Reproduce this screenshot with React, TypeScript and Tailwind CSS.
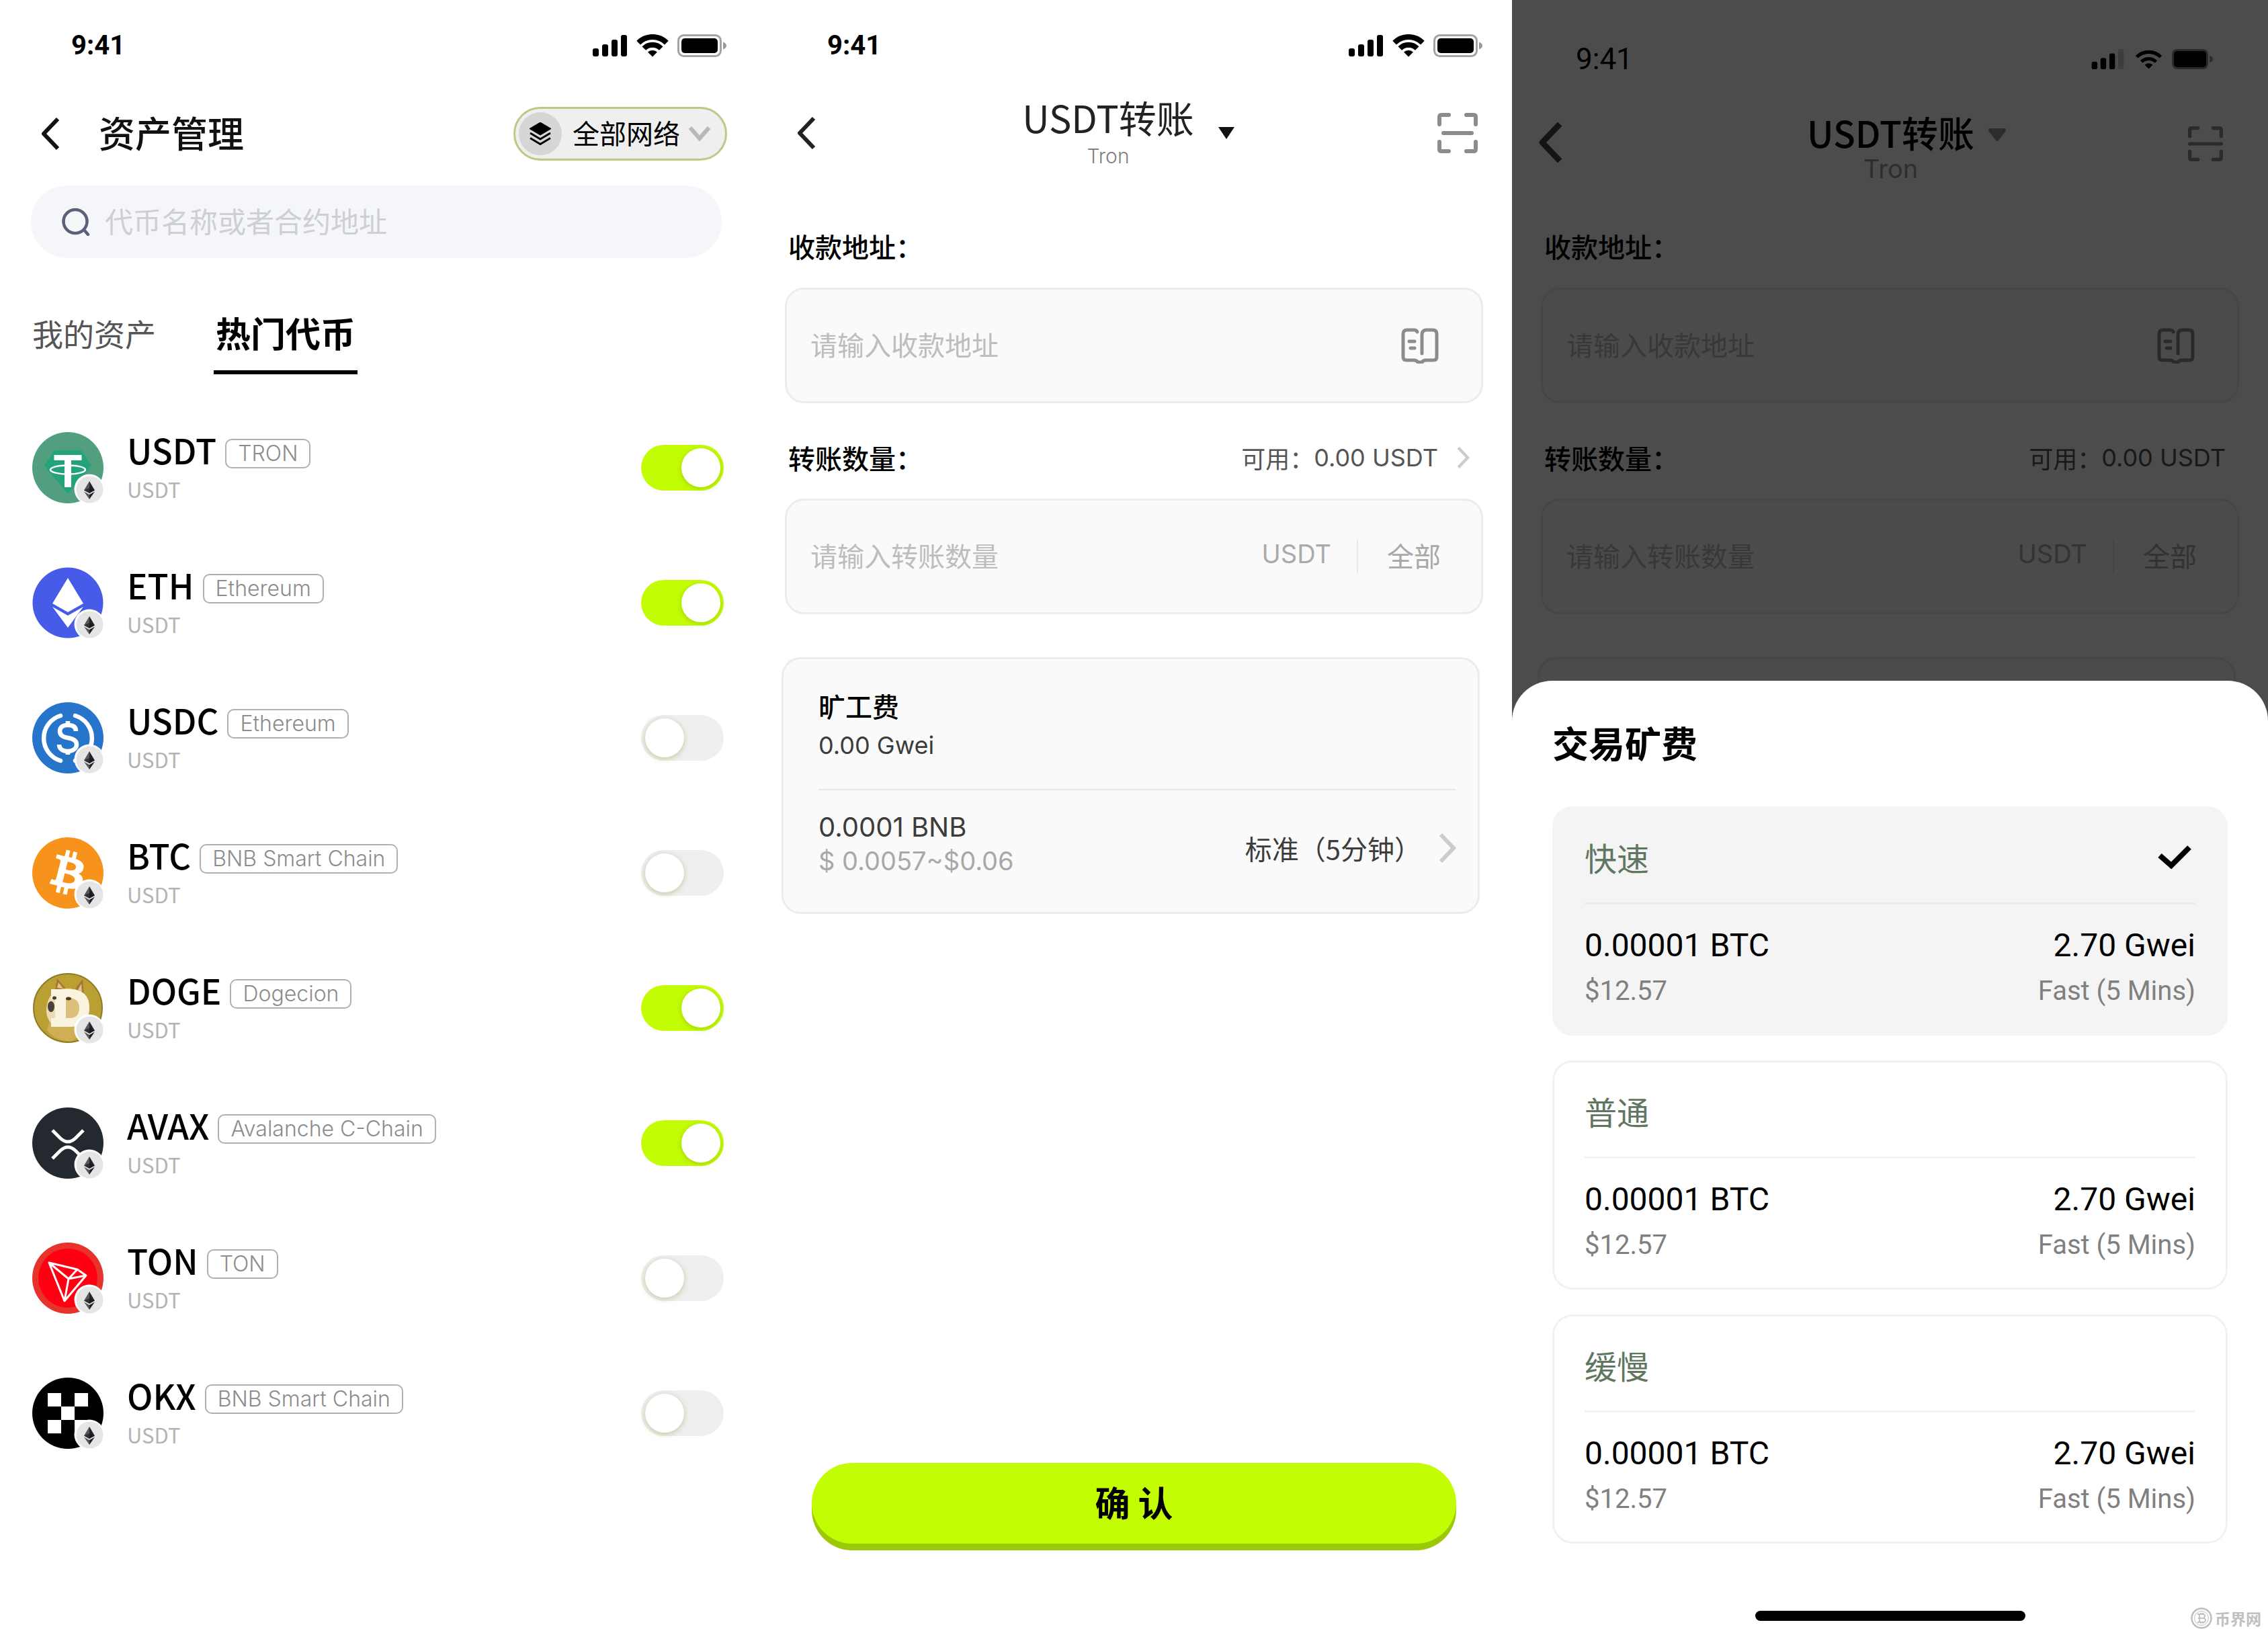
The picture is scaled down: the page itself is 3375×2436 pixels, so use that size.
import { useState, type ReactNode } from "react";
import { SiBitcoin } from "react-icons/si";

/* ---------- status bar ---------- */

function Signal({ faded = false, className }: { faded?: boolean; className: string }) {
  return (
    <svg viewBox="0 0 52 32" className={className} fill="currentColor" aria-hidden="true">
      <rect x="0" y="20" width="9" height="12" rx="3" />
      <rect x="14" y="14" width="9" height="18" rx="3" />
      <rect x="28" y="7" width="9" height="25" rx="3" />
      <rect x="42" y="0" width="9" height="32" rx="3" opacity={faded ? 0.2 : 1} />
    </svg>
  );
}

function Wifi({ thin = false, className }: { thin?: boolean; className: string }) {
  const w = thin ? 6 : 8;
  return (
    <svg viewBox="0 0 48 34" className={className} fill="none" stroke="currentColor" strokeWidth={w} aria-hidden="true">
      <path d="M3.1 12.6A29.5 29.5 0 0 1 44.9 12.6" />
      <path d="M11.3 21A18 18 0 0 1 36.7 21" />
      <path d="M24 33.5L17 26.5A10 10 0 0 1 31 26.5Z" fill="currentColor" stroke="none" />
    </svg>
  );
}

function Battery({ className }: { className: string }) {
  return (
    <svg viewBox="0 0 74 34" className={className} aria-hidden="true">
      <rect x="1.5" y="1.5" width="63" height="31" rx="8" fill="none" stroke="currentColor" strokeWidth="3" opacity="0.36" />
      <rect x="6" y="6" width="54" height="22" rx="5" fill="currentColor" />
      <path d="M68 11.5C71 12.8 73 14.600 73 17S71 21.200 68 22.500Z" fill="currentColor" opacity="0.4" />
    </svg>
  );
}

function StatusBar() {
  return (
    <div className="flex h-[136px] items-center justify-between pr-[43px] pl-[106px] text-black">
      <span className="font-['Roboto',sans-serif] text-[40px] leading-[48px] font-bold">9:41</span>
      <div className="flex items-center gap-[13px]">
        <Signal className="h-[32px] w-[52px]" />
        <Wifi className="h-[34px] w-[48px]" />
        <Battery className="h-[34px] w-[74px]" />
      </div>
    </div>
  );
}

/* ---------- line icons ---------- */

function BackIcon({ className, width }: { className: string; width: number }) {
  return (
    <svg viewBox="0 0 28 48" className={className} fill="none" stroke="currentColor" strokeWidth={width} strokeLinejoin="round" aria-hidden="true">
      <path d="M25 2L4 24L25 46" />
    </svg>
  );
}

function ChevronRight({ className }: { className: string }) {
  return (
    <svg viewBox="0 0 26 44" className={className} fill="none" stroke="#cccccc" strokeWidth="6" aria-hidden="true">
      <path d="M3 2L22 22L3 42" />
    </svg>
  );
}

function ScanIcon({ className, wide = false }: { className: string; wide?: boolean }) {
  return (
    <svg viewBox="0 0 60 60" className={className} fill="none" stroke="#8c8c8c" strokeWidth="6" strokeLinecap="round" aria-hidden="true">
      <path d="M3 17V6Q3 3 6 3H17M43 3H54Q57 3 57 6V17M57 43V54Q57 57 54 57H43M17 57H6Q3 57 3 54V43" />
      <path d={wide ? "M3 30H57" : "M9 30H51"} />
    </svg>
  );
}

function BookIcon() {
  return (
    <svg viewBox="0 0 56 54" className="h-[54px] w-[56px]" fill="none" stroke="#8c8c8c" strokeWidth="5" strokeLinecap="round" strokeLinejoin="round" aria-hidden="true">
      <path d="M24 7Q23 4 19 4H9Q3 4 3 10V44Q3 49 8 49H19Q23 49 25 52H31Q33 49 37 49H48Q53 49 53 44V10Q53 4 47 4H38Q31 4 31 11V39" />
      <path d="M12 21H20M14 31H20" />
    </svg>
  );
}

function LayersIcon() {
  return (
    <svg viewBox="0 0 34 34" className="h-[34px] w-[34px]" aria-hidden="true">
      <path d="M17 0L33 9.500L17 19L1 9.500Z" fill="#000" stroke="#000" strokeWidth="1" strokeLinejoin="round" />
      <path d="M2 16L17 25L32 16M2 23.500L17 32.500L32 23.500" fill="none" stroke="#000" strokeWidth="3" strokeLinejoin="round" />
    </svg>
  );
}

/* ---------- token logos ---------- */

const logos: Record<string, ReactNode> = {
  USDT: (
    <>
      <circle cx="53" cy="53" r="53" fill="#519f7e" />
      <path d="M33 27H73L88 50L53 92L18 50Z" fill="#23a27c" />
      <path d="M32.500 34H73.500V42H58V82H48V42H32.500Z" fill="#fff" />
      <ellipse cx="53" cy="56" rx="26" ry="6.500" fill="none" stroke="#fff" strokeWidth="2.500" />
    </>
  ),
  ETH: (
    <>
      <circle cx="53" cy="53" r="52.500" fill="#465be8" />
      <path d="M53 16L76 54L53 67L30 54Z" fill="#fff" />
      <path d="M30 59L53 72L76 59L53 90Z" fill="#fff" />
    </>
  ),
  USDC: (
    <>
      <circle cx="53" cy="53" r="53" fill="#2775ca" />
      <g fill="none" stroke="#fff" strokeWidth="6.500" strokeLinecap="round">
        <path d="M42 20A35 35 0 0 0 42 87M64 20A35 35 0 0 1 64 87" />
        <path d="M65 43C65 36 60 34 53 34S41 37 41 43S46 52 53 53S66 57 66 63S60 73 53 73S40 70 40 63" strokeLinecap="butt" />
        <path d="M53 28V33M53 73V78" strokeLinecap="butt" />
      </g>
    </>
  ),
  BTC: (
    <>
      <circle cx="53" cy="53" r="50" fill="#fff" />
      <SiBitcoin x="0" y="0" width="106" height="106" size={106} color="#f7931a" />
    </>
  ),
  DOGE: (
    <>
      <circle cx="53" cy="53" r="51" fill="#baa033" stroke="#8f7a26" strokeWidth="2" />
      <path d="M22 86Q28 62 40 58L78 70Q80 88 60 102Q36 104 22 86Z" fill="#cfae56" />
      <path d="M34 26L37 9L50 24ZM64 24L75 10L77 34Z" fill="#a9782f" />
      <path d="M37 23L39 15L46 24ZM68 26L73 17L74 31Z" fill="#e2c38a" />
      <path d="M22 48Q26 26 50 24Q80 24 84 46Q88 66 72 78H30Q18 66 22 48Z" fill="#ecdcb6" />
      <path d="M28 25H58Q85 27 85 52Q85 80 58 81H28V68H34V40H28Z" fill="#faf3e0" />
      <path d="M50 38H57Q70 40 70 53Q70 67 57 68H50Z" fill="#dcc07a" />
      <ellipse cx="28" cy="51" rx="5" ry="8" fill="#4b4236" />
      <ellipse cx="33" cy="38" rx="3" ry="2.500" fill="#4b3a24" />
      <ellipse cx="54" cy="39" rx="4" ry="2.500" fill="#4b3a24" />
    </>
  ),
  AVAX: (
    <>
      <circle cx="53" cy="53" r="53" fill="#23292f" />
      <g fill="none" stroke="#fff" strokeWidth="5">
        <path d="M30 34L42 46Q53 56 64 46L76 34" />
        <path d="M30 76L42 64Q53 54 64 64L76 76" />
      </g>
    </>
  ),
  TON: (
    <>
      <circle cx="53" cy="53" r="53" fill="#e8322c" />
      <circle cx="53" cy="53" r="44" fill="#ff0013" />
      <path d="M25 30L67 40L80 49L48 87ZM25 30L54 54L67 40M54 54L80 49M54 54L48 87" fill="none" stroke="#fff" strokeWidth="3" strokeLinejoin="round" />
    </>
  ),
  OKX: (
    <>
      <circle cx="53" cy="53" r="53" fill="#000" />
      <path d="M23 23H43V43H23ZM63 23H83V43H63ZM43 43H63V63H43ZM23 63H43V83H23ZM63 63H83V83H63Z" fill="#fff" />
    </>
  ),
};

function TokenLogo({ name }: { name: string }) {
  return (
    <svg viewBox="0 0 106 106" className="h-[106px] w-[106px] shrink-0" aria-hidden="true">
      {logos[name]}
      <circle cx="85" cy="85" r="22.500" fill="#fff" />
      <circle cx="85.500" cy="85.500" r="20" fill="#e5e5e5" />
      <path d="M85 73L77 86.500L85 91Z" fill="#55585c" />
      <path d="M85 73L93 86.500L85 91Z" fill="#222427" />
      <path d="M85 83L77 86.500L85 91L93 86.500Z" fill="#14161a" opacity="0.6" />
      <path d="M77 88.500L85 93V100Z" fill="#55585c" />
      <path d="M93 88.500L85 93V100Z" fill="#222427" />
    </svg>
  );
}

/* ---------- asset management ---------- */

const tokens = [
  { name: "USDT", chain: "TRON", on: true },
  { name: "ETH", chain: "Ethereum", on: true },
  { name: "USDC", chain: "Ethereum", on: false },
  { name: "BTC", chain: "BNB Smart Chain", on: false },
  { name: "DOGE", chain: "Dogecion", on: true },
  { name: "AVAX", chain: "Avalanche C-Chain", on: true },
  { name: "TON", chain: "TON", on: false },
  { name: "OKX", chain: "BNB Smart Chain", on: false },
];

function TokenRow({ name, chain, on }: { name: string; chain: string; on: boolean }) {
  return (
    <li className="flex h-[105px] items-center">
      <TokenLogo name={name} />
      <div className="ml-[35px] flex flex-1 flex-col gap-2">
        <div className="flex h-[56px] items-end gap-[13px]">
          <span className="text-[51px] leading-[56px] font-medium text-black">{name}</span>
          <span className="rounded-[10px] border-2 border-[#b0b0b0] px-[17px] font-['Inter',sans-serif] text-[32px] leading-[40px] font-light text-[#8c8c8c]">
            {chain}
          </span>
        </div>
        <span className="text-[31px] leading-[46px] text-[#b4b4b4]">USDT</span>
      </div>
      <input
        type="checkbox"
        defaultChecked={on}
        aria-label={name + " " + chain}
        className="h-[68px] w-[123px] shrink-0 appearance-none rounded-full bg-[#efefef] before:mt-[5px] before:ml-[6px] before:block before:h-[58px] before:w-[58px] before:rounded-full before:bg-white before:shadow-[0_2px_8px_rgba(110,130,0,0.35)] checked:bg-[#c3fd03] checked:before:ml-[60px]"
      />
    </li>
  );
}

function AssetsScreen() {
  const [tab, setTab] = useState("hot");
  return (
    <section className="flex flex-col bg-white">
      <StatusBar />
      <header className="mt-[23px] flex h-[80px] items-center pr-[43px] pl-[61px]">
        <button type="button" aria-label="返回" className="text-[#111111]">
          <BackIcon className="h-[48px] w-[28px]" width={6} />
        </button>
        <h1 className="ml-[58px] flex-1 pb-1 text-[54px] leading-[76px] font-medium text-[#111111]">资产管理</h1>
        <label className="flex h-[80px] items-center rounded-full border-[3px] border-[#b9ca84] bg-[#efefef] pr-[21px] pl-[5px]">
          <span className="flex h-[64px] w-[64px] items-center justify-center rounded-full bg-[#d6d6d6]">
            <LayersIcon />
          </span>
          <select aria-label="网络" className="ml-[16px] appearance-none bg-transparent pb-1 text-[40px] leading-[56px] text-black">
            <option>全部网络</option>
          </select>
          <svg viewBox="0 0 34 24" className="ml-[12px] h-[24px] w-[34px]" fill="none" stroke="#b8b8b8" strokeWidth="6" aria-hidden="true">
            <path d="M3 3L17 19L31 3" />
          </svg>
        </label>
      </header>

      <div className="mt-[37px] pr-[51px] pl-[46px]">
        <label className="flex h-[108px] items-center rounded-full bg-[#f5f6f9] pr-[46px] pl-[46px]">
          <svg viewBox="0 0 42 42" className="h-[42px] w-[42px] shrink-0" fill="none" stroke="#5d5f77" strokeWidth="4.500" strokeLinecap="round" aria-hidden="true">
            <circle cx="20" cy="20.500" r="17.500" />
            <path d="M33 33L39 40" />
          </svg>
          <input
            type="text"
            aria-label="搜索代币"
            placeholder="代币名称或者合约地址"
            className="ml-[22px] min-w-0 flex-1 bg-transparent pb-1 text-[42px] leading-[60px] outline-none placeholder:text-[#cdcfd5]"
          />
        </label>
      </div>

      <div role="tablist" className="mt-[79px] flex items-start gap-[86px] pl-[48px]">
        <button type="button" role="tab" aria-selected={tab === "mine"} onClick={() => setTab("mine")} className="text-[46px] leading-[64px] text-[#555555]">
          我的资产
        </button>
        <button type="button" role="tab" aria-selected={tab === "hot"} onClick={() => setTab("hot")} className="border-b-[6px] border-black px-[3px] pb-[24px] text-[52px] leading-[64px] font-bold text-black">
          热门代币
        </button>
      </div>

      <ul className="mt-[86px] flex flex-col gap-[96px] px-[48px]">
        {tokens.map((t) => (
          <TokenRow key={t.name} {...t} />
        ))}
      </ul>
    </section>
  );
}

/* ---------- transfer form ---------- */

function TransferFields({ id, arrow }: { id: string; arrow: boolean }) {
  return (
    <div className="flex flex-col px-[43px]">
      <label htmlFor={id + "-address"} className="pl-[5px] text-[40px] leading-[60px] font-medium text-black">
        收款地址：
      </label>
      <div className="mt-[32px] flex h-[172px] items-center rounded-[28px] border-[3px] border-[#ececef] bg-[#fafafa] pr-[63px] pl-[35px]">
        <input
          id={id + "-address"}
          type="text"
          placeholder="请输入收款地址"
          className="min-w-0 flex-1 bg-transparent pb-1 text-[40px] leading-[60px] outline-none placeholder:text-[#bdbdbd]"
        />
        <button type="button" aria-label="地址簿">
          <BookIcon />
        </button>
      </div>

      <div className="mt-[51px] flex items-center justify-between pr-[20px] pl-[5px]">
        <label htmlFor={id + "-amount"} className="text-[40px] leading-[60px] font-medium text-black">
          转账数量：
        </label>
        <div className="flex items-center gap-[28px] leading-[60px] text-[#555555]">
          <span className="flex items-center">
            <span className="text-[36px]">可用：</span>
            <span className="font-['Inter',sans-serif] text-[36px]">0.00 USDT</span>
          </span>
          {arrow && <ChevronRight className="h-[32px] w-[19px]" />}
        </div>
      </div>
      <div className="mt-[31px] flex h-[172px] items-center rounded-[28px] border-[3px] border-[#ececef] bg-[#fafafa] pr-[60px] pl-[35px]">
        <input
          id={id + "-amount"}
          type="text"
          inputMode="decimal"
          placeholder="请输入转账数量"
          className="min-w-0 flex-1 bg-transparent pb-1 text-[40px] leading-[60px] outline-none placeholder:text-[#bdbdbd]"
        />
        <span className="pb-2 font-['Inter',sans-serif] text-[38px] leading-[60px] text-[#aaaaaa]">USDT</span>
        <span className="ml-[38px] h-[50px] border-l-2 border-[#e8e8e8]" />
        <button type="button" className="ml-[43px] pb-1 text-[40px] leading-[60px] text-[#a8a8a8]">
          全部
        </button>
      </div>
    </div>
  );
}

function FeeCard() {
  return (
    <div className="mt-[64px] pr-[48px] pl-[38px]">
      <div className="rounded-[28px] border-[3px] border-[#ececef] bg-[#fafafa] pt-[41px] pr-[32px] pb-[51px] pl-[52px]">
        <p className="text-[40px] leading-[56px] font-medium text-black">旷工费</p>
        <p className="mt-[3px] font-['Inter',sans-serif] text-[36px] leading-[56px] text-[#3c3c3c]">0.00 Gwei</p>
        <hr className="mt-[37px] border-t-2 border-[#e8e8e8]" />
        <div className="mt-[30px] flex items-center justify-between">
          <div className="font-['Inter',sans-serif] leading-[50px]">
            <p className="text-[40px] text-[#3c3c3c]">0.0001 BNB</p>
            <p className="text-[38px] text-[#a8a8a8]">$ 0.0057~$0.06</p>
          </div>
          <button type="button" className="flex items-center gap-[26px] pt-[12px] text-[40px] leading-[56px] text-[#3c3c3c]">
            <span>标准（5分钟）</span>
            <ChevronRight className="h-[44px] w-[26px]" />
          </button>
        </div>
      </div>
    </div>
  );
}

function TransferScreen() {
  return (
    <section className="flex flex-col bg-white">
      <StatusBar />
      <header className="grid h-[124px] grid-cols-[1fr_auto_1fr] items-center pr-[51px] pl-[61px]">
        <button type="button" aria-label="返回" className="justify-self-start text-[#222222]">
          <BackIcon className="h-[48px] w-[28px]" width={6} />
        </button>
        <button type="button" className="mr-[27px] flex items-center gap-[36px]">
          <span className="flex flex-col gap-2">
            <span className="text-[56px] leading-[60px] text-[#222222]">USDT转账</span>
            <span className="font-['Inter',sans-serif] text-[30px] leading-[40px] font-light text-[#808080]">Tron</span>
          </span>
          <svg viewBox="0 0 24 18" className="h-[18px] w-[24px]" fill="#111111" aria-hidden="true">
            <path d="M0 0H24L12 18Z" />
          </svg>
        </button>
        <button type="button" aria-label="扫一扫" className="justify-self-end">
          <ScanIcon className="h-[60px] w-[60px]" />
        </button>
      </header>
      <div className="mt-[76px]">
        <TransferFields id="transfer" arrow />
        <FeeCard />
      </div>
      <div className="mt-auto px-[83px] pb-[139px]">
        <button type="button" className="h-[120px] w-full rounded-full bg-[#c3fd03] pb-1 text-[52px] leading-[70px] font-bold text-black shadow-[0_10px_0_#9bc908]">
          确 认
        </button>
      </div>
    </section>
  );
}

/* ---------- fee picker ---------- */

const speeds = ["快速", "普通", "缓慢"];

function SpeedOption({ title, checked, onPick }: { title: string; checked: boolean; onPick: () => void }) {
  return (
    <label className={checked ? "block rounded-[30px] border-[3px] border-[#f4f4f4] bg-[#f4f4f4] px-[45px] pt-[44px] pb-[39px]" : "block rounded-[30px] border-[3px] border-[#f2f2f2] bg-white px-[45px] pt-[44px] pb-[39px]"}>
      <input type="radio" name="speed" className="sr-only" checked={checked} onChange={onPick} />
      <span className="flex items-center justify-between pr-[6px]">
        <span className="text-[48px] leading-[56px] text-[#5f7660]">{title}</span>
        {checked && (
          <svg viewBox="0 0 50 36" className="h-[36px] w-[50px]" fill="none" stroke="#000" strokeWidth="8" aria-hidden="true">
            <path d="M3 16L20 31L47 4" />
          </svg>
        )}
      </span>
      <span className={checked ? "mt-[40px] block h-[3px] bg-[#ebebeb]" : "mt-[40px] block h-[3px] bg-[#f3f3f3]"} />
      <span className="mt-[33px] flex justify-between font-['Roboto',sans-serif] text-[48px] leading-[56px] text-black">
        <span>0.00001 BTC</span>
        <span>2.70 Gwei</span>
      </span>
      <span className="mt-4 flex justify-between font-['Roboto',sans-serif] text-[40px] leading-[48px] text-[#808080]">
        <span>$12.57</span>
        <span>Fast (5 Mins)</span>
      </span>
    </label>
  );
}

function FeeSheetScreen() {
  const [speed, setSpeed] = useState("快速");
  return (
    <section className="relative grid bg-white">
      <div className="col-start-1 row-start-1 flex flex-col">
        <div className="flex h-[160px] items-center justify-between pt-[16px] pr-[81px] pl-[95px] text-black">
          <span className="font-['Roboto',sans-serif] text-[44px] leading-[48px]">9:41</span>
          <div className="flex items-center gap-[14px]">
            <Signal className="h-[30px] w-[52px]" faded />
            <Wifi className="h-[29px] w-[41px]" thin />
            <svg viewBox="0 0 62 30" className="h-[30px] w-[62px]" aria-hidden="true">
              <rect width="54" height="30" rx="8" opacity="0.45" />
              <rect x="3" y="3" width="48" height="24" rx="5" />
              <path d="M56 10C60 11 61 13 61 15S60 19 56 20Z" opacity="0.4" />
            </svg>
          </div>
        </div>
        <header className="grid h-[118px] grid-cols-[1fr_auto_1fr] items-center pr-[67px] pl-[40px]">
          <button type="button" aria-label="返回" className="justify-self-start pb-[14px] text-[#444444]">
            <BackIcon className="h-[60px] w-[35px]" width={7} />
          </button>
          <button type="button" className="ml-[77px] grid grid-cols-[auto_auto] items-center gap-x-[20px]">
            <span className="text-[54px] leading-[60px] font-medium text-black">USDT转账</span>
            <svg viewBox="0 0 28 20" className="mt-[8px] h-[20px] w-[28px]" fill="#969696" aria-hidden="true">
              <path d="M3 0H25Q29 1 26 5L16 18Q14 20 12 18L2 5Q-1 1 3 0Z" />
            </svg>
            <span className="pt-1 font-['Inter',sans-serif] text-[38px] leading-[40px] text-[#9c9c9c]">Tron</span>
          </button>
          <button type="button" aria-label="扫一扫" className="justify-self-end pb-[10px]">
            <ScanIcon className="h-[52px] w-[52px]" wide />
          </button>
        </header>
        <div className="mt-[58px]">
          <TransferFields id="sheet" arrow={false} />
          <div className="mt-[64px] pr-[48px] pl-[38px]">
            <div className="h-[160px] rounded-[28px] border-[3px] border-[#ececef] bg-[#fafafa]" />
          </div>
        </div>
      </div>

      <div className="z-10 col-start-1 row-start-1 bg-black/70" />

      <div role="dialog" aria-label="交易矿费" className="z-20 col-start-1 row-start-1 flex flex-col self-end rounded-t-[60px] bg-white px-[60px] pt-[60px] pb-[24px]">
        <h2 className="text-[54px] leading-[64px] font-bold text-black">交易矿费</h2>
        <div className="mt-[63px] flex flex-col gap-[37px]">
          {speeds.map((s) => (
            <SpeedOption key={s} title={s} checked={speed === s} onPick={() => setSpeed(s)} />
          ))}
        </div>
        <div className="mt-[100px] h-[15px] w-[402px] self-center rounded-full bg-black" />
      </div>

      <div className="absolute right-[10px] bottom-[12px] z-30 flex items-center gap-1 text-[#c0c0c0]">
        <svg viewBox="0 0 32 32" className="h-[32px] w-[32px]" fill="none" stroke="currentColor" aria-hidden="true">
          <circle cx="16" cy="16" r="14.500" strokeWidth="2.500" />
          <circle cx="16" cy="16" r="10.500" strokeWidth="1" />
          <path d="M13 9V23M13 10H18Q21 10 21 13T18 16H11M18 16Q22 16 22 19T18 22H13M10 10H13M10 22H13M15 8V10M18 8V10M15 22V24M18 22V24" strokeWidth="1.800" />
        </svg>
        <span className="text-[23px] leading-[30px] font-bold">币界网</span>
      </div>
    </section>
  );
}

export default function App() {
  return (
    <main className="grid min-h-screen grid-cols-3 bg-white font-['Noto_Sans_CJK_SC',sans-serif]">
      <AssetsScreen />
      <TransferScreen />
      <FeeSheetScreen />
    </main>
  );
}
